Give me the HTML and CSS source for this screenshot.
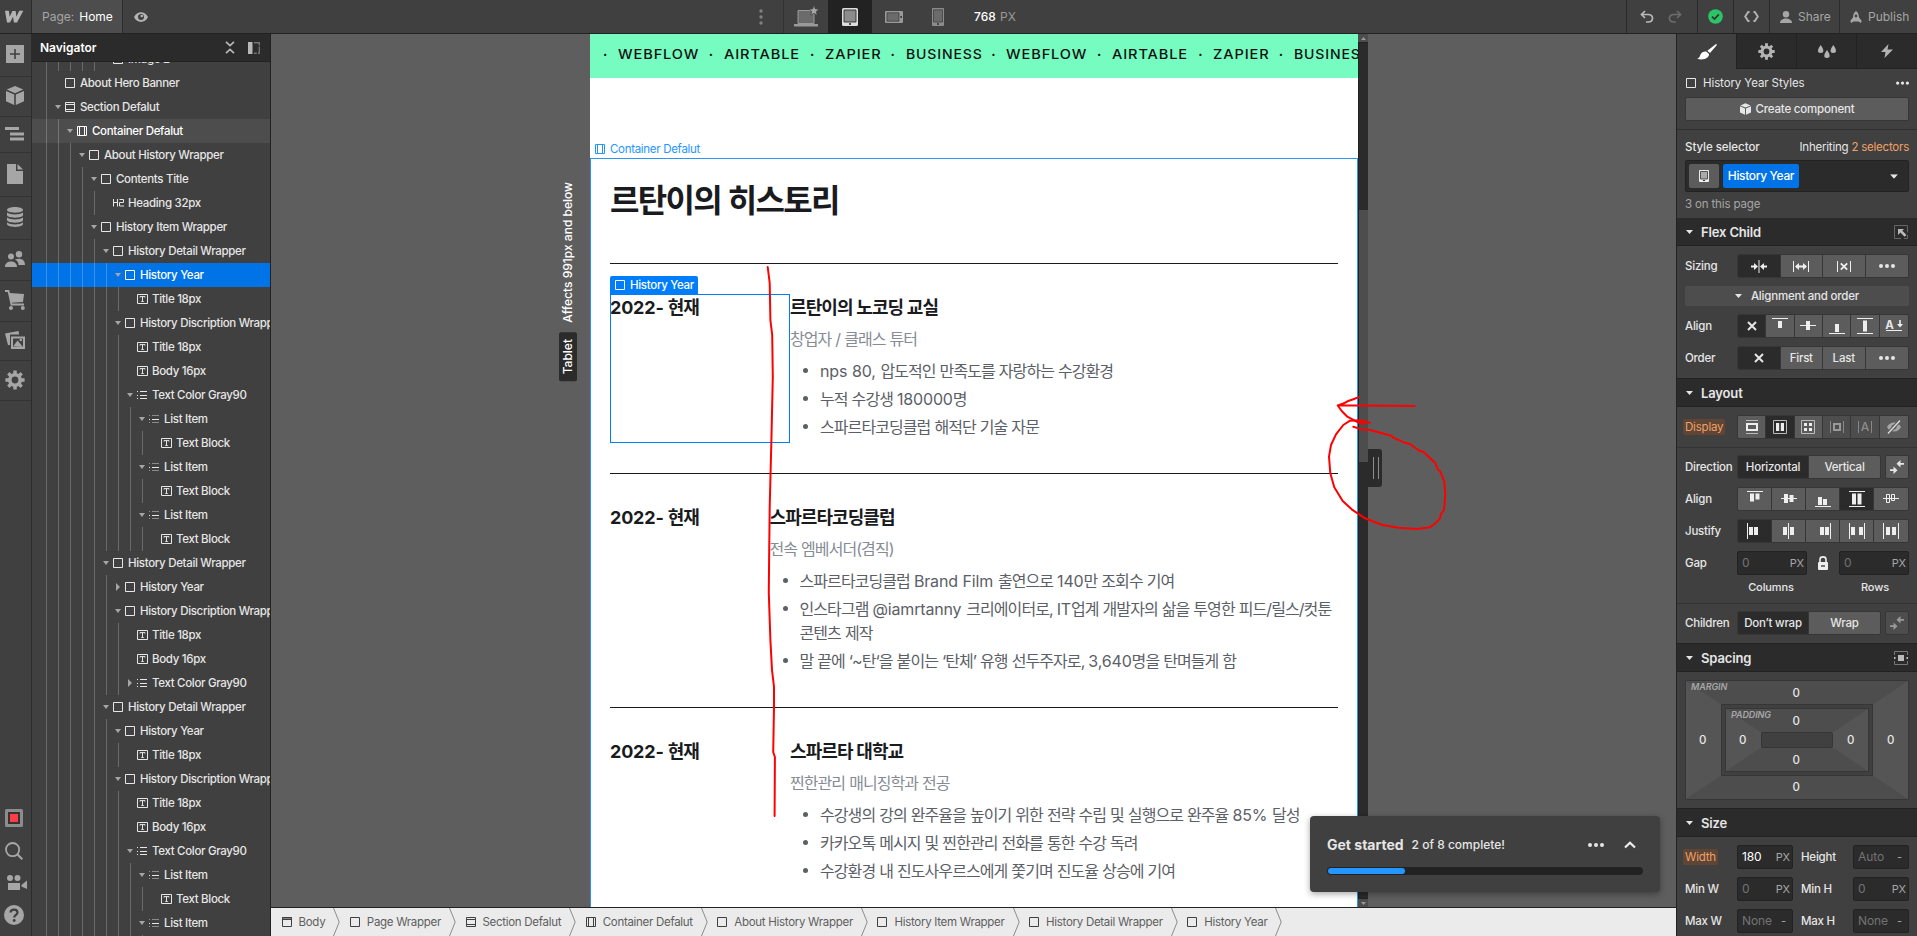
FILE: index.html
```html
<!DOCTYPE html>
<html lang="ko">
<head>
<meta charset="utf-8">
<title>Webflow Designer</title>
<link rel="stylesheet" href="styles.css">
</head>
<body>
<svg class="defs" width="0" height="0" aria-hidden="true">
  <symbol id="i-box" viewBox="0 0 11 10"><path d="M.5.5h9v9h-9z" fill="none" stroke="currentColor"/></symbol>
  <symbol id="i-section" viewBox="0 0 11 10"><path d="M.5.5h9v9h-9zM.5 2.5h9M.5 7.5h9" fill="none" stroke="currentColor"/></symbol>
  <symbol id="i-container" viewBox="0 0 11 10"><path d="M.5.5h9v9h-9zM2.5.5v9M7.5.5v9" fill="none" stroke="currentColor"/></symbol>
  <symbol id="i-body" viewBox="0 0 11 10"><path d="M.5.5h9v9h-9zM0 2.5h10" fill="none" stroke="currentColor"/><path d="M0 0h10v3H0z" fill="currentColor" opacity=".6"/></symbol>
  <symbol id="i-text" viewBox="0 0 11 10"><path d="M.5.5h10v9H.5zM3 3.500V2.600h5v.9M5.500 2.600v5M4.300 7.500h2.400" fill="none" stroke="currentColor"/></symbol>
  <symbol id="i-h2" viewBox="0 0 11 10"><path d="M.5 1v7.500M4.500 1v7.500M.5 4.500h4M6.500 1.500h4v3h-4V8h4.500" fill="none" stroke="currentColor"/></symbol>
  <symbol id="i-list" viewBox="0 0 11 10"><path d="M3 1.500h7M3 5.500h7M3 8.500h7M0 1.500h1M0 5.500h1M0 8.500h1" fill="none" stroke="currentColor"/></symbol>
  <symbol id="i-item" viewBox="0 0 11 10"><path d="M3 1.500h7M3 8.500h7M0 1.500h1M0 8.500h1" stroke="currentColor" opacity=".45"/><path d="M3 5.500h7M0 5.500h1" stroke="currentColor"/></symbol>
  <symbol id="i-down" viewBox="0 0 7 4"><path d="M0 0h7L3.500 4z" fill="currentColor"/></symbol>
  <symbol id="i-dots" viewBox="0 0 16 4"><g fill="currentColor"><circle cx="2" cy="2" r="2"/><circle cx="8" cy="2" r="2"/><circle cx="14" cy="2" r="2"/></g></symbol>
  <symbol id="i-cube" viewBox="0 0 18 19"><path d="M9 0l8.300 3.600L9 7.200.7 3.600zM0 5l8.200 3.600V19L0 15.200zM18 5L9.800 8.600V19L18 15.200z" fill="currentColor"/></symbol>
  <symbol id="i-gear" viewBox="-10 -10 20 20"><circle r="5.200" fill="none" stroke="currentColor" stroke-width="3.600"/><path d="M0-9.600v4M0 9.600v-4M-9.600 0h4M9.600 0h-4M-6.700-6.700l2.600 2.600M6.700-6.700L4.100-4.100M-6.700 6.700l2.600-2.600M6.700 6.700L4.100 4.100" stroke="currentColor" stroke-width="3.400"/></symbol>
  <symbol id="i-x" viewBox="0 0 10 10"><path d="M1 1l8 8M9 1L1 9" stroke="currentColor" stroke-width="2"/></symbol>
  <symbol id="i-swap" viewBox="0 0 14 14"><path d="M14 3.800H8M0 10.200h6" stroke="currentColor" stroke-width="1.700"/><path d="M6.500 3.800L10.500 0v7.600zM7.500 10.200L3.500 6.400V14z" fill="currentColor"/></symbol>
  <symbol id="i-chev" viewBox="0 0 7 28"><path d="M.5 0l5.700 14L.5 28" fill="none" stroke="#8c8c8c"/></symbol>
</svg>
<div class="app">
  <header class="topbar">
    <div class="logo"><svg width="19" height="13" viewBox="0 0 19 13"><path d="M0 .8h3.800l.9 6L7.400 1h3.300l.6 5.800L14.300.8h4L12 12.500H8.900L8 6.800 5 12.500H2z" fill="#b3b3b3"/></svg></div>
    <div class="page-name"><span>Page:</span> Home</div>
    <div class="eye"><svg width="14" height="10" viewBox="0 0 14 10"><path d="M0 5C3-1.500 11-1.500 14 5c-3 6.500-11 6.500-14 0z" fill="#b3b3b3"/><circle cx="7" cy="5" r="3" fill="#404040"/><circle cx="7.800" cy="4" r="1.300" fill="#b3b3b3"/></svg></div>
    <div class="devices">
      <div class="kebab"><svg width="4" height="16" viewBox="0 0 4 16"><g fill="#808080"><circle cx="2" cy="2" r="1.700"/><circle cx="2" cy="8" r="1.700"/><circle cx="2" cy="14" r="1.700"/></g></svg></div>
      <div class="dev first"><svg width="24" height="21" viewBox="0 0 24 21"><path d="M4 4.500h16v13H4z" fill="#6b6b6b" stroke="#999"/><path d="M0 18h24v2.500H0z" fill="#999"/><path d="M20 -.5l1.400 3.400 3.600.3-2.700 2.400.8 3.600L20 7.300l-3.100 1.900.8-3.600L15 3.200l3.600-.3z" fill="#a6a6a6" stroke="#404040" stroke-width=".7"/></svg></div>
      <div class="dev on"><svg width="16" height="18" viewBox="0 0 16 18"><rect width="16" height="18" rx="1.500" fill="#ddd"/><path d="M2 2h12v12H2z" fill="#8c8c8c" stroke="#222" stroke-width=".8"/><path d="M7 15.200h2v1.500H7z" fill="#222"/></svg></div>
      <div class="dev"><svg width="18" height="12" viewBox="0 0 18 12"><rect width="18" height="12" rx="1" fill="#999"/><path d="M2 1.800h12v8.400H2z" fill="#6b6b6b" stroke="#404040" stroke-width=".8"/><path d="M15.500 5h1.500v2h-1.500z" fill="#333"/></svg></div>
      <div class="dev"><svg width="12" height="18" viewBox="0 0 12 18"><rect width="12" height="18" rx="1" fill="#8c8c8c"/><path d="M1.500 1.800h9V14h-9z" fill="#6b6b6b" stroke="#404040" stroke-width=".8"/><path d="M5 15.300h2v1.500H5z" fill="#333"/></svg></div>
      <div class="px">768 <span>PX</span></div>
    </div>
    <div class="actions">
      <div class="act undo"><svg width="14" height="14" viewBox="0 0 14 14"><path d="M5 1L1.500 4.500 5 8M1.500 4.500H8c6 0 6 7.500 0 7.500H6" fill="none" stroke="#b8b8b8" stroke-width="1.700"/></svg><svg width="14" height="14" viewBox="0 0 14 14"><path d="M9 1l3.500 3.500L9 8M12.500 4.500H6c-6 0-6 7.500 0 7.500h2" fill="none" stroke="#6b6b6b" stroke-width="1.700"/></svg></div>
      <div class="act ok"><svg width="15" height="15" viewBox="0 0 15 15"><circle cx="7.500" cy="7.500" r="7.300" fill="#2bc466"/><path d="M4 7.600l2.500 2.400 4.300-4.600" fill="none" stroke="#333" stroke-width="1.700"/></svg></div>
      <div class="act code"><svg width="15" height="11" viewBox="0 0 15 11"><path d="M5.500 1H4.200L1.200 5.500l3 4.500h1.300M9.500 1h1.300l3 4.500-3 4.500H9.500" fill="none" stroke="#b3b3b3" stroke-width="1.900"/></svg></div>
      <div class="act share"><svg width="12" height="12" viewBox="0 0 12 12"><circle cx="6" cy="3.200" r="3.200" fill="#a6a6a6"/><path d="M0 12c0-6 12-6 12 0z" fill="#a6a6a6"/></svg>Share</div>
      <div class="act publish"><svg width="12" height="12" viewBox="0 0 12 12"><path fill-rule="evenodd" d="M6 0c2.500 1.800 3 4.500 3 6.500l2.600 3.200-.6 2.300-2.500-1.500h-5L1 12l-.6-2.300L3 6.500C3 4.500 3.500 1.800 6 0zm0 3.600a1.400 1.400 0 100 2.800 1.400 1.400 0 000-2.800z" fill="#a6a6a6"/></svg>Publish</div>
    </div>
  </header>

  <nav class="rail">
    <div class="rail-top">
      <div class="r1"><svg width="18" height="18" viewBox="0 0 18 18"><path d="M0 0h18v18H0z" fill="#a6a6a6"/><path d="M9 4v10M4 9h10" stroke="#404040" stroke-width="1.600"/></svg></div>
      <div class="r2"><svg width="18" height="19"><use href="#i-cube"/></svg></div>
      <div class="r3"><svg width="19" height="14" viewBox="0 0 19 14"><path d="M0 1.500h14M5 7h14M5 12h14" stroke="#a6a6a6" stroke-width="3"/></svg></div>
      <div class="r4"><svg width="16" height="20" viewBox="0 0 16 20"><path d="M0 0h9v7h7v13H0zM10.500 0L16 5.500h-5.500z" fill="#a6a6a6"/></svg></div>
      <div class="r5"><svg width="16" height="20" viewBox="0 0 16 20"><path d="M0 3C0-1 16-1 16 3c0 3.500-16 3.500-16 0zM0 5.500c3 2.500 13 2.500 16 0V8c0 3.500-16 3.500-16 0zM0 10.500C3 13 13 13 16 10.500V13c0 3.500-16 3.500-16 0zM0 15.500c3 2.500 13 2.500 16 0v1.300c0 4.200-16 4.200-16 0z" fill="#a6a6a6"/></svg></div>
      <div class="r6"><svg width="20" height="16" viewBox="0 0 20 16"><circle cx="6" cy="5.500" r="3" fill="#a6a6a6"/><circle cx="14" cy="3.200" r="3.200" fill="#a6a6a6"/><path d="M0 16c-.5-7.500 12.500-7.500 12 0zM10 8.500c5-2 10-.5 10 5.500h-6.500c0-2.800-1.500-4.500-3.500-5.500z" fill="#a6a6a6"/></svg></div>
      <div class="r7"><svg width="20" height="20" viewBox="0 0 20 20"><path d="M0 1h3.500l3 13.500H19" fill="none" stroke="#a6a6a6" stroke-width="1.800"/><path d="M4.500 3L19 4l-1 8-12 .7z" fill="#a6a6a6"/><circle cx="6" cy="18" r="2" fill="#a6a6a6"/><circle cx="17.800" cy="18" r="2" fill="#a6a6a6"/></svg></div>
      <div class="r8"><svg width="20" height="18" viewBox="0 0 20 18"><path d="M0 2.500L13.500 0l.7 3.500H5V14H3z" fill="#a6a6a6"/><path d="M7 6.500h12V17H7z" fill="none" stroke="#a6a6a6" stroke-width="2"/><path d="M8 15.500l4.500-6L18 16z" fill="#a6a6a6"/><circle cx="15.800" cy="9" r="1.300" fill="#a6a6a6"/></svg></div>
      <div class="r9"><svg width="20" height="20"><use href="#i-gear"/></svg></div>
    </div>
    <div class="rail-bottom">
      <svg width="18" height="18" viewBox="0 0 18 18"><rect width="18" height="18" rx="1.500" fill="#8c8c8c"/><path d="M3 3h12v12H3z" fill="#333"/><path d="M5 5h8v8H5z" fill="#ff3d47"/></svg>
      <svg width="18" height="18" viewBox="0 0 18 18"><circle cx="7.600" cy="7.600" r="6.600" fill="none" stroke="#a6a6a6" stroke-width="1.800"/><path d="M12.300 12.300l5 5" stroke="#a6a6a6" stroke-width="2"/></svg>
      <svg class="cam" width="20" height="15" viewBox="0 0 20 15"><g fill="#a6a6a6"><circle cx="3" cy="3" r="3"/><circle cx="10.500" cy="3" r="3"/><path d="M1 8h12v7H1zM14.500 10L20 5.500V14l-5.500-2.500z"/></g></svg>
      <svg width="20" height="20" viewBox="0 0 20 20"><circle cx="10" cy="10" r="10" fill="#a6a6a6"/><path d="M6.500 7.500c.3-4 7-3.800 7 0 0 2.500-3.300 2.300-3.300 5" fill="none" stroke="#404040" stroke-width="2.200"/><circle cx="10.200" cy="15.500" r="1.400" fill="#404040"/></svg>
    </div>
  </nav>

  <aside class="navigator">
    <div class="nav-head"><b>Navigator</b>
      <svg width="8" height="13" viewBox="0 0 8 13"><path d="M0 .8l4 3.700L8 .8M0 12.200l4-3.700 4 3.700" fill="none" stroke="#b8b8b8" stroke-width="1.700"/></svg>
      <svg width="12" height="12" viewBox="0 0 12 12"><path d="M0 0h4.500v12H0z" fill="#b8b8b8"/><path d="M6 .7h5.300v10.600H6" fill="none" stroke="#737373" stroke-width="1.400" stroke-dasharray="8 1.200"/></svg>
    </div>
    <div class="tree">
      <div class="row l4"><svg class="ic"><use href="#i-box"/></svg>Image 2</div>
      <div class="row l0"><svg class="ic"><use href="#i-box"/></svg>About Hero Banner</div>
      <div class="row l0 open"><svg class="ic"><use href="#i-section"/></svg>Section Defalut</div>
      <div class="row l1 open hover"><svg class="ic"><use href="#i-container"/></svg>Container Defalut</div>
      <div class="row l2 open"><svg class="ic"><use href="#i-box"/></svg>About History Wrapper</div>
      <div class="row l3 open"><svg class="ic"><use href="#i-box"/></svg>Contents Title</div>
      <div class="row l4"><svg class="ic"><use href="#i-h2"/></svg>Heading 32px</div>
      <div class="row l3 open"><svg class="ic"><use href="#i-box"/></svg>History Item Wrapper</div>
      <div class="row l4 open"><svg class="ic"><use href="#i-box"/></svg>History Detail Wrapper</div>
      <div class="row l5 open selected"><svg class="ic"><use href="#i-box"/></svg>History Year</div>
      <div class="row l6"><svg class="ic"><use href="#i-text"/></svg>Title 18px</div>
      <div class="row l5 open"><svg class="ic"><use href="#i-box"/></svg>History Discription Wrapper</div>
      <div class="row l6"><svg class="ic"><use href="#i-text"/></svg>Title 18px</div>
      <div class="row l6"><svg class="ic"><use href="#i-text"/></svg>Body 16px</div>
      <div class="row l6 open"><svg class="ic"><use href="#i-list"/></svg>Text Color Gray90</div>
      <div class="row l7 open"><svg class="ic"><use href="#i-item"/></svg>List Item</div>
      <div class="row l8"><svg class="ic"><use href="#i-text"/></svg>Text Block</div>
      <div class="row l7 open"><svg class="ic"><use href="#i-item"/></svg>List Item</div>
      <div class="row l8"><svg class="ic"><use href="#i-text"/></svg>Text Block</div>
      <div class="row l7 open"><svg class="ic"><use href="#i-item"/></svg>List Item</div>
      <div class="row l8"><svg class="ic"><use href="#i-text"/></svg>Text Block</div>
      <div class="row l4 open"><svg class="ic"><use href="#i-box"/></svg>History Detail Wrapper</div>
      <div class="row l5 shut"><svg class="ic"><use href="#i-box"/></svg>History Year</div>
      <div class="row l5 open"><svg class="ic"><use href="#i-box"/></svg>History Discription Wrapper</div>
      <div class="row l6"><svg class="ic"><use href="#i-text"/></svg>Title 18px</div>
      <div class="row l6"><svg class="ic"><use href="#i-text"/></svg>Body 16px</div>
      <div class="row l6 shut"><svg class="ic"><use href="#i-list"/></svg>Text Color Gray90</div>
      <div class="row l4 open"><svg class="ic"><use href="#i-box"/></svg>History Detail Wrapper</div>
      <div class="row l5 open"><svg class="ic"><use href="#i-box"/></svg>History Year</div>
      <div class="row l6"><svg class="ic"><use href="#i-text"/></svg>Title 18px</div>
      <div class="row l5 open"><svg class="ic"><use href="#i-box"/></svg>History Discription Wrapper</div>
      <div class="row l6"><svg class="ic"><use href="#i-text"/></svg>Title 18px</div>
      <div class="row l6"><svg class="ic"><use href="#i-text"/></svg>Body 16px</div>
      <div class="row l6 open"><svg class="ic"><use href="#i-list"/></svg>Text Color Gray90</div>
      <div class="row l7 open"><svg class="ic"><use href="#i-item"/></svg>List Item</div>
      <div class="row l8"><svg class="ic"><use href="#i-text"/></svg>Text Block</div>
      <div class="row l7 open"><svg class="ic"><use href="#i-item"/></svg>List Item</div>
      <div class="row l8"></div>
    </div>
  </aside>

  <main class="stage">
    <div class="viewport">
      <div class="side-label"><span>Affects 991px and below</span><span class="tablet">Tablet</span></div>
      <div class="preview">
        <div class="marquee"><div class="track">
          <i>·</i><span class="w1">WEBFLOW</span><i>·</i><span class="w2">AIRTABLE</span><i>·</i><span class="w3">ZAPIER</span><i>·</i><span class="w4">BUSINESS</span><i>·</i><span class="w1">WEBFLOW</span><i>·</i><span class="w2">AIRTABLE</span><i>·</i><span class="w3">ZAPIER</span><i>·</i><span class="w4">BUSINESS</span>
        </div></div>
        <div class="outline-name"><svg class="ic"><use href="#i-container"/></svg>Container Defalut</div>
        <div class="container">
          <h2>르탄이의 히스토리</h2>
          <section class="item">
            <div class="year boxed"><div class="badge"><svg class="ic"><use href="#i-box"/></svg>History Year</div><span class="lt">2022- </span>현재</div>
            <div class="desc">
              <h3>르탄이의 노코딩 교실</h3>
              <p>창업자 / 클래스 튜터</p>
              <ul>
                <li><span class="lt">nps 80, </span>압도적인 만족도를 자랑하는 수강환경</li>
                <li>누적 수강생 <span class="lt">180000</span>명</li>
                <li>스파르타코딩클럽 해적단 기술 자문</li>
              </ul>
            </div>
          </section>
          <section class="item narrow">
            <div class="year"><span class="lt">2022- </span>현재</div>
            <div class="desc">
              <h3>스파르타코딩클럽</h3>
              <p>전속 엠베서더(겸직)</p>
              <ul>
                <li>스파르타코딩클럽 <span class="lt">Brand Film </span>출연으로 <span class="lt">140</span>만 조회수 기여</li>
                <li>인스타그램 <span class="lt">@iamrtanny </span>크리에이터로, <span class="lt">IT</span>업계 개발자의 삶을 투영한 피드/릴스/컷툰<br>콘텐츠 제작</li>
                <li>말 끝에 ‘~탄‘을 붙이는 ‘탄체’ 유행 선두주자로, <span class="lt">3,640</span>명을 탄며들게 함</li>
              </ul>
            </div>
          </section>
          <section class="item">
            <div class="year"><span class="lt">2022- </span>현재</div>
            <div class="desc">
              <h3>스파르타 대학교</h3>
              <p>찐한관리 매니징학과 전공</p>
              <ul>
                <li>수강생의 강의 완주율을 높이기 위한 전략 수립 및 실행으로 완주율 <span class="lt">85% </span>달성</li>
                <li>카카오톡 메시지 및 찐한관리 전화를 통한 수강 독려</li>
                <li>수강환경 내 진도사우르스에게 쫓기며 진도율 상승에 기여</li>
              </ul>
            </div>
          </section>
        </div>
      </div>
      <div class="scrollbar"><div class="sb-btn"><svg width="5" height="3" viewBox="0 0 5 3"><path d="M0 3h5L2.500 0z" fill="#999"/></svg></div><div class="sb-track"><div class="thumb"></div></div><div class="sb-btn"><svg width="5" height="3" viewBox="0 0 5 3"><path d="M0 0h5L2.500 3z" fill="#999"/></svg></div></div>
      <div class="handle"></div>
      <div class="toast">
        <div class="toast-row"><b>Get started</b><span>2 of 8 complete!</span><svg class="d" width="16" height="4"><use href="#i-dots"/></svg><svg width="12" height="8" viewBox="0 0 12 8"><path d="M1 6.500L6 1.700l5 4.800" fill="none" stroke="#eee" stroke-width="2.200"/></svg></div>
        <div class="progress"><div class="bar"></div></div>
      </div>
      <svg class="ink" width="1405" height="873" viewBox="271 34 1405 873">
        <path d="M767.700 267l2 16 .7 37 1.800 15 .6 42-1.400 63-1.700 67-.6 53-.3 33 1.600 47 1.600 30 2 17v20l-.8 45 1.700 5-.3 59"/>
        <path d="M1414.700 406l-54-.4-23-.1M1358.500 397.300l-4.500 1.700-6.500 2.300-4 2.200-5.800 2 4 5.500 5.600 5.700 9.400 5 6.600 2.300 2-1"/>
        <path d="M1370 422.700l-10-2.400-10 .4-6.700 4.300-7.300 9.300-5 10.700-2 11.700 1.300 16.600 4 14 8.400 13.700 9 8.300 13.300 9 16.700 6.400 16.600 3 18.400 1.300 13.300-1.700 6-4.500 4-4.500.8-4 3.200-4.300 1.300-15-1-13.300-4.300-10.700-2-1.300-3-7-11.700-11-4-1-9.300-6.700-5.500-1.300-11.200-5-2-2-21.300-5.700-8-.6-8.700-2.700"/>
      </svg>
    </div>
    <div class="crumbs">
      <span><svg class="ic"><use href="#i-body"/></svg>Body</span><svg class="chev"><use href="#i-chev"/></svg>
      <span><svg class="ic"><use href="#i-box"/></svg>Page Wrapper</span><svg class="chev"><use href="#i-chev"/></svg>
      <span><svg class="ic"><use href="#i-section"/></svg>Section Defalut</span><svg class="chev"><use href="#i-chev"/></svg>
      <span><svg class="ic"><use href="#i-container"/></svg>Container Defalut</span><svg class="chev"><use href="#i-chev"/></svg>
      <span><svg class="ic"><use href="#i-box"/></svg>About History Wrapper</span><svg class="chev"><use href="#i-chev"/></svg>
      <span><svg class="ic"><use href="#i-box"/></svg>History Item Wrapper</span><svg class="chev"><use href="#i-chev"/></svg>
      <span><svg class="ic"><use href="#i-box"/></svg>History Detail Wrapper</span><svg class="chev"><use href="#i-chev"/></svg>
      <span><svg class="ic"><use href="#i-box"/></svg>History Year</span><svg class="chev"><use href="#i-chev"/></svg>
    </div>
  </main>

  <aside class="panel">
    <div class="tabs">
      <div class="tab on"><svg width="20" height="16" viewBox="0 0 20 16"><path d="M19 0c1 .2 1 1 .5 1.600L13 9l-2.700-2.300zM9.200 7.600l2.800 2.500c.5 4-6 7-12 4.500 3-.5 2.500-2 3.500-4 1-2.200 3.500-3.500 5.700-3z" fill="#fff"/></svg></div>
      <div class="tab"><svg width="17" height="17"><use href="#i-gear"/></svg></div>
      <div class="tab"><svg width="18" height="13" viewBox="0 0 18 13"><path d="M2.700 0c3.600 5 3.600 8 0 8s-3.600-3 0-8zM9 5c3.600 5 3.600 8 0 8s-3.600-3 0-8zM15.300 0c3.600 5 3.600 8 0 8s-3.600-3 0-8z" fill="#b3b3b3"/></svg></div>
      <div class="tab"><svg width="12" height="14" viewBox="0 0 12 14"><path d="M7.500 0L0 8h4.500l-1 6L12 5.500H6.500z" fill="#b3b3b3"/></svg></div>
    </div>
    <div class="styles-head"><svg class="ic"><use href="#i-box"/></svg>History Year Styles<svg class="more" width="13" height="4"><use href="#i-dots"/></svg></div>
    <div class="create"><svg width="11" height="12"><use href="#i-cube"/></svg>Create component</div>
    <div class="selector-area">
      <div class="sel-head"><span>Style selector</span><span class="dim">Inheriting <em>2 selectors</em></span></div>
      <div class="sel-box"><div class="mini"><svg width="10" height="12" viewBox="0 0 10 12"><rect width="10" height="12" rx="1" fill="#eee"/><path d="M1.500 1.500h7v7.500h-7z" fill="#aaa" stroke="#333" stroke-width=".8"/><path d="M4 10h2v1H4z" fill="#333"/></svg></div><div class="tag">History Year</div><svg class="caret" width="8" height="5" viewBox="0 0 7 4"><use href="#i-down"/></svg></div>
      <div class="count">3 on this page</div>
    </div>
    <div class="sec first"><svg width="7" height="4"><use href="#i-down"/></svg>Flex Child<svg class="tool" width="14" height="14" viewBox="0 0 14 14"><path d="M7 13.500H.5V.5h13v7M13.500 10v3.500H10" fill="none" stroke="#666"/><path d="M4 4h6L8.300 5.700l4.200 4.200-1.900 1.900-4.200-4.200L4 10z" fill="#bbb"/></svg></div>
    <div class="body b1">
      <div class="line"><label>Sizing</label><div class="seg c4">
        <div class="on"><svg width="16" height="13" viewBox="0 0 16 13"><path d="M8 0v13" stroke="#eee"/><path d="M0 6.500h4M12 6.500h4" stroke="#eee" stroke-width="1.800"/><path d="M3 3l4 3.500L3 10zM13 3L9 6.500l4 3.500z" fill="#eee"/></svg></div>
        <div><svg width="16" height="11" viewBox="0 0 16 11"><path d="M.5 0v11M15.500 0v11" stroke="#eee"/><path d="M3 5.500h10" stroke="#eee" stroke-width="1.800"/><path d="M6 2v7L2 5.500zM10 2v7l4-3.500z" fill="#eee"/></svg></div>
        <div><svg width="14" height="11" viewBox="0 0 14 11"><path d="M.5 0v11M13.500 0v11" stroke="#eee"/><path d="M3.800 2.300l6.400 6.400M10.200 2.300L3.800 8.700" stroke="#eee" stroke-width="1.800"/></svg></div>
        <div><svg width="16" height="4"><use href="#i-dots"/></svg></div></div></div>
      <div class="fold"><svg width="7" height="4"><use href="#i-down"/></svg>Alignment and order</div>
      <div class="line"><label>Align</label><div class="seg c6">
        <div class="on"><svg width="10" height="10"><use href="#i-x"/></svg></div>
        <div><svg width="16" height="16" viewBox="0 0 16 16"><path d="M0 .5h16" stroke="#eee"/><path d="M6 3h4v7H6z" fill="#eee"/></svg></div>
        <div><svg width="16" height="16" viewBox="0 0 16 16"><path d="M0 7.500h16" stroke="#eee"/><path d="M6 3h4v9H6z" fill="#eee"/></svg></div>
        <div><svg width="16" height="16" viewBox="0 0 16 16"><path d="M0 15.500h16" stroke="#eee"/><path d="M6 6h4v8H6z" fill="#eee"/></svg></div>
        <div><svg width="16" height="16" viewBox="0 0 16 16"><path d="M0 .5h16M0 15.500h16" stroke="#eee"/><path d="M6 2.500h4v11H6z" fill="#eee"/></svg></div>
        <div class="base">A<svg width="6" height="9" viewBox="0 0 6 9"><path d="M3 0v5" stroke="#eee" stroke-width="1.600"/><path d="M0 4h6L3 7.500z" fill="#eee"/></svg></div></div></div>
      <div class="line"><label>Order</label><div class="seg c4"><div class="on"><svg width="10" height="10"><use href="#i-x"/></svg></div><div>First</div><div>Last</div><div><svg width="16" height="4"><use href="#i-dots"/></svg></div></div></div>
    </div>
    <div class="sec"><svg width="7" height="4"><use href="#i-down"/></svg>Layout</div>
    <div class="body b2">
      <div class="line"><label><mark>Display</mark></label><div class="seg c6">
        <div><svg width="12" height="14" viewBox="0 0 12 14"><path d="M0 .5h12M0 13.500h12" stroke="#bbb"/><path d="M1 4h10v6H1z" fill="none" stroke="#eee" stroke-width="2"/></svg></div>
        <div class="on"><svg width="14" height="14" viewBox="0 0 14 14"><path d="M.5.5h13v13H.5z" fill="none" stroke="#bbb"/><path d="M3 3h3.200v8H3zM7.800 3H11v8H7.800z" fill="#eee"/></svg></div>
        <div><svg width="14" height="14" viewBox="0 0 14 14"><path d="M.5.5h13v13H.5z" fill="none" stroke="#bbb"/><path d="M3 3h3v3H3zM8 3h3v3H8zM3 8h3v3H3zM8 8h3v3H8z" fill="#eee"/></svg></div>
        <div class="off"><svg width="14" height="12" viewBox="0 0 14 12"><path d="M.5 0v12M13.500 0v12" stroke="#888"/><path d="M4 3h6v6H4z" fill="none" stroke="#999" stroke-width="2"/></svg></div>
        <div class="off inl">A</div>
        <div><svg width="14" height="14" viewBox="0 0 14 14"><path d="M0 7c3-6 11-6 14 0-3 6-11 6-14 0z" fill="#a6a6a6"/><circle cx="7" cy="7" r="2.500" fill="#666"/><path d="M1 13.500L13 .5" stroke="#5c5c5c" stroke-width="3.400"/><path d="M1 13.500L13 .5" stroke="#ddd" stroke-width="1.300"/></svg></div></div></div>
      <hr>
      <div class="line"><label>Direction</label><div class="seg c2"><div class="on">Horizontal</div><div>Vertical</div></div><div class="mini-btn"><svg width="14" height="14"><use href="#i-swap"/></svg></div></div>
      <div class="line"><label>Align</label><div class="seg c5">
        <div><svg width="16" height="16" viewBox="0 0 16 16"><path d="M0 .5h16" stroke="#eee"/><path d="M3 2.500h4v8H3zM8.500 2.500h4v6h-4z" fill="#eee"/></svg></div>
        <div><svg width="16" height="16" viewBox="0 0 16 16"><path d="M0 7.500h16" stroke="#eee"/><path d="M3 3h4v9H3zM8.500 4h4v7h-4z" fill="#eee"/></svg></div>
        <div><svg width="16" height="16" viewBox="0 0 16 16"><path d="M0 15.500h16" stroke="#eee"/><path d="M3 6h4v8H3zM8 8h4v6H8z" fill="#eee"/></svg></div>
        <div class="on"><svg width="16" height="16" viewBox="0 0 16 16"><path d="M0 .5h16M0 15.500h16" stroke="#eee"/><path d="M3 2.500h4v11H3zM8.500 2.500h4v11h-4z" fill="#eee"/></svg></div>
        <div><svg width="16" height="16" viewBox="0 0 16 16"><path d="M0 7.500h16M3.500 3.500h3v8h-3zM8.500 3.500h3v6h-3z" fill="none" stroke="#eee"/></svg></div></div></div>
      <div class="line"><label>Justify</label><div class="seg c5">
        <div class="on"><svg width="16" height="16" viewBox="0 0 16 16"><path d="M.5 0v16" stroke="#eee"/><path d="M2 4h4v8H2zM7 4h4v8H7z" fill="#eee"/></svg></div>
        <div><svg width="16" height="16" viewBox="0 0 16 16"><path d="M7.500 0v16" stroke="#eee"/><path d="M2 4h4v8H2zM9 4h4v8H9z" fill="#eee"/></svg></div>
        <div><svg width="16" height="16" viewBox="0 0 16 16"><path d="M15.500 0v16" stroke="#eee"/><path d="M5 4h4v8H5zM10 4h4v8h-4z" fill="#eee"/></svg></div>
        <div><svg width="16" height="16" viewBox="0 0 16 16"><path d="M.5 0v16M15.500 0v16" stroke="#eee"/><path d="M2 4h4v8H2zM10 4h4v8h-4z" fill="#eee"/></svg></div>
        <div><svg width="16" height="16" viewBox="0 0 16 16"><path d="M.5 0v16M15.500 0v16" stroke="#eee"/><path d="M3 4h4v8H3zM9 4h4v8H9z" fill="#eee"/></svg></div></div></div>
      <div class="line gap"><label>Gap</label><div class="inp"><span>0</span><u>PX</u></div><svg class="lock" width="10" height="14" viewBox="0 0 10 14"><path d="M2 6V3.500C2 0 8 0 8 3.500V6" fill="none" stroke="#eee" stroke-width="1.600"/><rect y="6" width="10" height="8" rx="1" fill="#eee"/><path d="M3 10h4" stroke="#404040" stroke-width="1.400"/></svg><div class="inp"><span>0</span><u>PX</u></div></div>
      <div class="gap-names"><span>Columns</span><span>Rows</span></div>
      <hr>
      <div class="line"><label>Children</label><div class="seg c2"><div class="on">Don’t wrap</div><div>Wrap</div></div><div class="mini-btn off"><svg width="14" height="14"><use href="#i-swap"/></svg></div></div>
    </div>
    <div class="sec"><svg width="7" height="4"><use href="#i-down"/></svg>Spacing<svg class="tool" width="14" height="14" viewBox="0 0 14 14"><path d="M.5 4V.5h13V4M.5 10v3.500h13V10" fill="none" stroke="#777"/><path d="M4 4h6v6H4zM0 6h1.500v2H0zM12.500 6H14v2h-1.500z" fill="#bbb"/></svg></div>
    <div class="body b3">
      <div class="spacing">
        <small>MARGIN</small><span class="v t">0</span><span class="v">0</span>
        <div class="ring"><div class="padding"><small>PADDING</small><span class="v t">0</span><span class="v">0</span><div class="core"></div><span class="v">0</span><span class="v b">0</span></div></div>
        <span class="v">0</span><span class="v b">0</span>
      </div>
    </div>
    <div class="sec"><svg width="7" height="4"><use href="#i-down"/></svg>Size</div>
    <div class="body b4">
      <label><mark>Width</mark></label><div class="inp"><span class="lit">180</span><u>PX</u></div><label>Height</label><div class="inp"><span>Auto</span><u class="dash">-</u></div>
      <label>Min W</label><div class="inp"><span>0</span><u>PX</u></div><label>Min H</label><div class="inp"><span>0</span><u>PX</u></div>
      <label>Max W</label><div class="inp"><span>None</span><u class="dash">-</u></div><label>Max H</label><div class="inp"><span>None</span><u class="dash">-</u></div>
    </div>
  </aside>
</div>
</body>
</html>
```

FILE: styles.css
```css
* { box-sizing: border-box; }
html, body { margin: 0; height: 100%; overflow: hidden; }
body { font: 500 11.5px/16px Inter, "Noto Sans CJK KR", sans-serif; letter-spacing: -.22px; color: #e6e6e6; background: #404040; }
svg { display: block; flex: none; overflow: visible; }
.defs { position: absolute; }
.ic { width: 11px; height: 10px; }

.app { display: grid; grid-template: 34px 902px / 32px 239px 1405px 241px; width: 1917px; height: 936px; }

/* top bar */
.topbar { grid-column: 1 / -1; display: flex; background: #404040; border-bottom: 1px solid #222; font-size: 12px; font-weight: 400; letter-spacing: 0; }
.topbar > div { display: flex; align-items: center; }
.logo { width: 32px; padding-left: 5px; border-right: 1px solid #2b2b2b; }
.page-name { width: 91px; padding-left: 10px; gap: 5px; background: #4d4d4d; border-right: 1px solid #2b2b2b; white-space: nowrap; color: #fff; }
.page-name span { color: #a6a6a6; }
.eye { width: 636px; padding-left: 11px; }
.devices { width: 867px; }
.kebab { width: 24px; }
.dev { width: 44px; height: 33px; display: grid; place-items: center; }
.dev.first { border-left: 1px solid #333; width: 45px; }
.dev.on { background: #222; }
.px { padding-left: 14px; font-weight: 500; color: #fff; }
.px span { color: #999; margin-left: 1px; font-weight: 400; }
.actions { color: #a6a6a6; }
.act { display: flex; align-items: center; height: 33px; border-left: 1px solid #2b2b2b; }
.undo { width: 71px; padding-left: 13px; gap: 14px; }
.ok { width: 36px; padding-left: 10px; }
.code { width: 36px; padding-left: 10px; }
.share { width: 70px; padding-left: 10px; gap: 6px; }
.publish { width: 78px; padding-left: 10px; gap: 6px; }

/* left rail */
.rail { display: flex; flex-direction: column; justify-content: space-between; border-right: 1px solid #2b2b2b; background: #404040; color: #a6a6a6; }
.rail-top > div { display: grid; place-items: center; border-bottom: 1px solid #333; padding: 0 2px 2px 0; }
.r1 { height: 43px; } .r2 { height: 40px; } .r3 { height: 36px; } .r4 { height: 44px; } .r5 { height: 43px; }
.r6, .r7 { height: 41px; } .r8 { height: 39px; } .r9 { height: 40px; }
.rail-bottom { display: flex; flex-direction: column; align-items: center; gap: 15px; padding: 0 3px 11px 0; }
.cam { margin-left: 5px; }

/* navigator */
.navigator { display: flex; flex-direction: column; overflow: hidden; border-right: 1px solid #222; background: #404040; letter-spacing: -.32px; }
.nav-head { display: flex; flex: none; align-items: center; height: 28px; padding: 0 10px 0 8px; background: #2b2b2b; border-bottom: 1px solid #222; letter-spacing: 0; }
.nav-head b { flex: 1; font-size: 12px; font-weight: 600; color: #fff; }
.nav-head svg + svg { margin-left: 14px; }
.tree { overflow: hidden; }
.tree .row:first-child { margin-top: -15px; }
.row { --lv: 0; display: flex; align-items: center; height: 24px; padding-left: calc(33px + var(--lv) * 12px); gap: 4px; white-space: nowrap; position: relative; }
.row::before { content: ""; position: absolute; left: 14px; top: 0; height: 24px; width: calc(1px + var(--lv) * 12px); background: repeating-linear-gradient(90deg, rgba(255,255,255,.22) 0 1px, transparent 1px 12px); }
.row.open::after, .row.shut::after { content: ""; position: absolute; left: calc(23px + var(--lv) * 12px); top: 10px; border: 3.5px solid transparent; border-top: 4px solid #a6a6a6; border-bottom: 0; }
.row.shut::after { top: 8px; left: calc(24px + var(--lv) * 12px); border: 4px solid transparent; border-left: 4px solid #a6a6a6; border-right: 0; }
.l1 { --lv: 1; } .l2 { --lv: 2; } .l3 { --lv: 3; } .l4 { --lv: 4; } .l5 { --lv: 5; } .l6 { --lv: 6; } .l7 { --lv: 7; } .l8 { --lv: 8; }
.hover { background: #4d4d4d; color: #fff; }
.selected { background: #0073e6; color: #fff; }

/* stage */
.stage { display: flex; flex-direction: column; overflow: hidden; }
.viewport { position: relative; display: flex; height: 873px; background: #5e5e5e; overflow: hidden; }
.side-label { width: 319px; display: flex; flex-direction: column; align-items: flex-end; gap: 9px; padding: 148px 13px 0 0; letter-spacing: 0; }
.side-label span { writing-mode: vertical-rl; transform: rotate(180deg); width: 18px; line-height: 17px; font-size: 12px; color: #fff; white-space: nowrap; }
.side-label .tablet { background: #2b2b2b; border-radius: 2px; padding: 7px 0; }
.preview { width: 768px; background: #fff; color: #1a1b1e; overflow: hidden; }
.marquee { height: 44px; background: #76fcc0; overflow: hidden; }
.track { display: flex; align-items: center; height: 40px; padding-left: 13px; width: 900px; font: 500 13px/20px Inter, sans-serif; color: #111; }
.track i { width: 5px; font-style: normal; font-weight: 700; }
.track span { letter-spacing: .8px; transform-origin: 0 50%; transform: scaleX(1.12); white-space: nowrap; margin-left: 10px; margin-right: 10.7px; }
.track .w4 { transform: scaleX(1.08); }
.w1 { width: 80px; } .w2 { width: 75.5px; } .w3 { width: 55px; } .w4 { width: 75px; }
.outline-name { display: flex; align-items: center; gap: 4px; margin-top: 62px; height: 18px; padding-left: 5px; color: #2496ff; font-weight: 400; letter-spacing: -.3px; }
.container { height: 760px; border: 1px solid #2b95f5; padding: 0 19px; }
h2 { margin: 21px 0 0; height: 83px; font-size: 32px; line-height: 42px; font-weight: 700; letter-spacing: -1.7px; word-spacing: 1px; }
.item { display: flex; border-top: 1px solid #1a1a1a; padding: 30px 0; }
.year { width: 180px; flex: none; font-size: 18px; line-height: 27px; font-weight: 700; letter-spacing: -1px; white-space: pre; }
.narrow .year { width: 159.5px; }
.boxed { position: relative; outline: 1px solid #007dfa; outline-offset: -1px; }
.badge { position: absolute; left: 0; top: -18px; display: flex; align-items: center; gap: 4px; width: 88px; height: 18px; padding-left: 5px; background: #007dfa; color: #fff; border-radius: 2px 2px 0 0; font-size: 11.5px; line-height: 18px; font-weight: 500; letter-spacing: -.3px; }
h3 { margin: 0 0 6px; font-size: 18px; line-height: 27px; font-weight: 700; letter-spacing: -.93px; word-spacing: .4px; }
.desc { white-space: nowrap; }
.desc p { margin: 0 0 8px; font-size: 16px; line-height: 24px; font-weight: 400; letter-spacing: -.93px; word-spacing: .4px; color: #868b94; }
.desc ul { margin: 0; padding-left: 30px; list-style: none; font-size: 16px; line-height: 24px; font-weight: 400; letter-spacing: -.92px; word-spacing: .4px; color: #5b6067; }
.desc li { position: relative; margin-bottom: 4px; }
.desc li::before { content: ""; position: absolute; left: -17px; top: 9px; width: 5px; height: 5px; border-radius: 50%; background: #5b6067; }
.lt { letter-spacing: -.01em; white-space: pre; }

.scrollbar { width: 10px; display: flex; flex-direction: column; background: #2b2b2b; }
.sb-btn { height: 8px; display: grid; place-items: center; background: #4d4d4d; }
.sb-track { flex: 1; padding-top: 167px; border: solid #222; border-width: 1px 0 1px 1px; }
.thumb { height: 252px; background: #4d4d4d; }
.handle { margin-top: 415px; width: 14px; height: 38px; background: #2b2b2b; border-radius: 0 3px 3px 0; padding: 8px 5px; }
.handle::before { content: ""; display: block; width: 4px; height: 22px; border: solid #8c8c8c; border-width: 0 1px; }
.ink { position: absolute; left: 0; top: 0; fill: none; stroke: #f00; stroke-width: 2; stroke-linecap: round; stroke-linejoin: round; }
.toast { position: absolute; right: 16px; bottom: 15px; width: 350px; height: 76px; padding: 19px 17px; background: #404040; border-radius: 4px; box-shadow: 0 2px 6px rgba(0,0,0,.35); letter-spacing: 0; }
.toast-row { display: flex; align-items: center; height: 20px; font-size: 12px; }
.toast-row b { font-size: 14px; font-weight: 700; margin-right: 8px; }
.toast-row .d { margin: 0 20px 0 auto; }
.toast-row svg:last-child { margin-right: 7px; }
.progress { margin-top: 12px; height: 8px; border-radius: 4px; background: #222; padding: 1px; }
.bar { width: 77px; height: 6px; border-radius: 3px; background: #2496ff; }

.crumbs { display: flex; height: 29px; border-top: 1px solid #222; background: #ebebeb; color: #5e5e5e; padding-left: 1px; font-weight: 400; letter-spacing: -.29px; }
.crumbs span { display: flex; align-items: center; gap: 6px; padding: 0 8px 0 9.5px; white-space: nowrap; }
.crumbs .ic { color: #404040; }
.chev { width: 7px; height: 28px; }

/* style panel */
.panel { border-left: 1px solid #222; background: #404040; overflow: hidden; }
.tabs { display: grid; grid-template-columns: 59px 60px 60px 61px; height: 35px; color: #b3b3b3; }
.tab { display: grid; place-items: center; background: #2b2b2b; border-left: 1px solid #222; border-bottom: 1px solid #222; }
.tab.on { background: #404040; border: 0; }
.styles-head { display: flex; align-items: center; gap: 6px; height: 28px; padding: 0 8px 0 9px; font-weight: 400; letter-spacing: -.1px; }
.more { margin-left: auto; }
.create { display: flex; align-items: center; justify-content: center; gap: 5px; height: 24px; margin: 0 8px 8px; background: #5c5c5c; border: 1px solid #363636; border-radius: 2px; letter-spacing: -.2px; }
.selector-area { height: 89px; border-top: 1px solid #2e2e2e; padding: 9px 8px 0; }
.sel-head { display: flex; justify-content: space-between; height: 21px; }
.sel-head span:first-child { letter-spacing: -.05px; }
.dim { font-weight: 400; }
em { font-style: normal; color: #f2a065; }
.sel-box { display: flex; align-items: center; gap: 4px; height: 32px; padding: 0 10px 0 3px; background: #2b2b2b; border: 1px solid #222; border-radius: 2px; }
.mini { width: 30px; height: 24px; display: grid; place-items: center; background: #5c5c5c; border-radius: 2px; }
.tag { width: 76px; height: 24px; text-align: center; line-height: 24px; background: #0073e6; border-radius: 2px; color: #fff; font-size: 12px; letter-spacing: -.35px; }
.caret { margin-left: auto; }
.count { margin-top: 4px; color: #a6a6a6; font-weight: 400; letter-spacing: -.15px; }
.sec { display: flex; align-items: center; height: 29px; padding: 0 9px; background: #2b2b2b; border: solid #222; border-width: 1px 0; font-size: 13px; font-weight: 600; letter-spacing: -.15px; }
.sec.first { height: 28px; border-top: 0; }
.sec > svg:first-child { margin-right: 8px; }
.tool { margin-left: auto; }
.body { padding: 8px; }
.b1 { height: 132px; display: flex; flex-direction: column; gap: 8px; }
.line { display: flex; align-items: center; height: 24px; }
.line label { width: 52px; }
mark { background: #5e4535; color: #f2a065; margin-left: -2px; padding: 1px 2px; border-radius: 2px; font-weight: 400; letter-spacing: -.2px; }
.seg { display: grid; width: 172px; height: 24px; border: 1px solid #363636; border-radius: 2px; background: #5c5c5c; overflow: hidden; }
.seg > div { display: grid; place-items: center; border-right: 1px solid #363636; }
.seg > div:last-child { border-right: 0; }
.seg .on { background: #2b2b2b; }
.seg .off { background: #4d4d4d; color: #8c8c8c; }
.c4 { grid-template-columns: repeat(4, 1fr); }
.c6 { grid-template-columns: repeat(6, 1fr); }
.c5 { grid-template-columns: repeat(5, 1fr); }
.c2 { grid-template-columns: 1fr 1fr; width: 144px; }
.seg .base { display: flex; justify-content: center; align-items: center; gap: 3px; margin: 0; font-weight: 700; background: linear-gradient(#eee, #eee) 50% 15px / 16px 1px no-repeat; line-height: 14px; padding-bottom: 3px; }
.seg .inl { font-size: 12px; line-height: 12px; background: linear-gradient(90deg, #888 1px, transparent 1px 13px, #888 13px) 50% 50% / 14px 12px no-repeat #4d4d4d; }
.fold { display: flex; align-items: center; justify-content: center; gap: 9px; height: 20px; background: #4d4d4d; border-radius: 2px; letter-spacing: -.2px; }
.b2 { height: 236px; display: flex; flex-direction: column; gap: 8px; }
hr { width: 240px; height: 1px; margin: 0 0 0 -8px; border: 0; background: #333; flex: none; }
.b2 hr { margin-bottom: -1px; }
.mini-btn { width: 24px; height: 24px; margin-left: 4px; display: grid; place-items: center; background: #5c5c5c; border: 1px solid #363636; border-radius: 2px; }
.mini-btn.off { background: #4d4d4d; color: #999; }
.inp { display: flex; justify-content: space-between; align-items: center; height: 24px; padding: 0 2px 0 4px; background: #2b2b2b; border: 1px solid #222; border-radius: 2px; font-weight: 400; font-size: 12px; letter-spacing: -.1px; color: #737373; }
.inp u { text-decoration: none; color: #a6a6a6; font-size: 11px; }
.inp .dash { margin-right: 4px; }
.inp .lit { color: #fff; }
.gap .inp { width: 70px; }
.lock { margin: 0 11px; }
.gap-names { display: flex; justify-content: space-between; margin: -4px 0 0 52px; height: 16px; font-size: 11px; letter-spacing: -.1px; }
.gap-names span { width: 68px; text-align: center; }
.b3 { height: 136px; }
.spacing, .padding { position: relative; isolation: isolate; display: grid; justify-items: center; align-items: center; border: 1px solid #363636; background: #4d4d4d; }
.spacing { width: 224px; height: 120px; grid-template: 24px 70px 24px / 33px 154px 35px; border-radius: 2px; }
.padding { width: 144px; height: 64px; grid-template: 23px 16px 23px / 33px 74px 35px; }
.spacing::before, .spacing::after, .padding::before, .padding::after { content: ""; position: absolute; z-index: -1; top: 0; bottom: 0; width: 36px; background: #555; }
.spacing::before, .padding::before { left: 0; clip-path: polygon(0 0, 100% 24px, 100% calc(100% - 24px), 0 100%); }
.spacing::after, .padding::after { right: 0; clip-path: polygon(100% 0, 0 24px, 0 calc(100% - 24px), 100% 100%); }
.spacing > .v.t, .spacing > .v.b, .padding > .v.t, .padding > .v.b { grid-column: 1 / -1; padding-right: 2px; }
.spacing > .v.t, .padding > .v.t { grid-row: 1; }
small { position: absolute; left: 5px; top: 0; font: italic 600 9px/12px Inter, sans-serif; letter-spacing: -.1px; color: #a6a6a6; }
.ring { width: 152px; height: 72px; padding: 3px; margin-left: 2px; background: #404040; border: 1px solid #363636; }
.core { width: 72px; height: 16px; margin-left: 2px; background: #404040; border: 1px solid #363636; border-radius: 2px; }
.b4 { display: grid; grid-template-columns: 52px 64px 52px 56px; row-gap: 8px; align-items: center; }
.b4 .inp { width: 56px; }
```
